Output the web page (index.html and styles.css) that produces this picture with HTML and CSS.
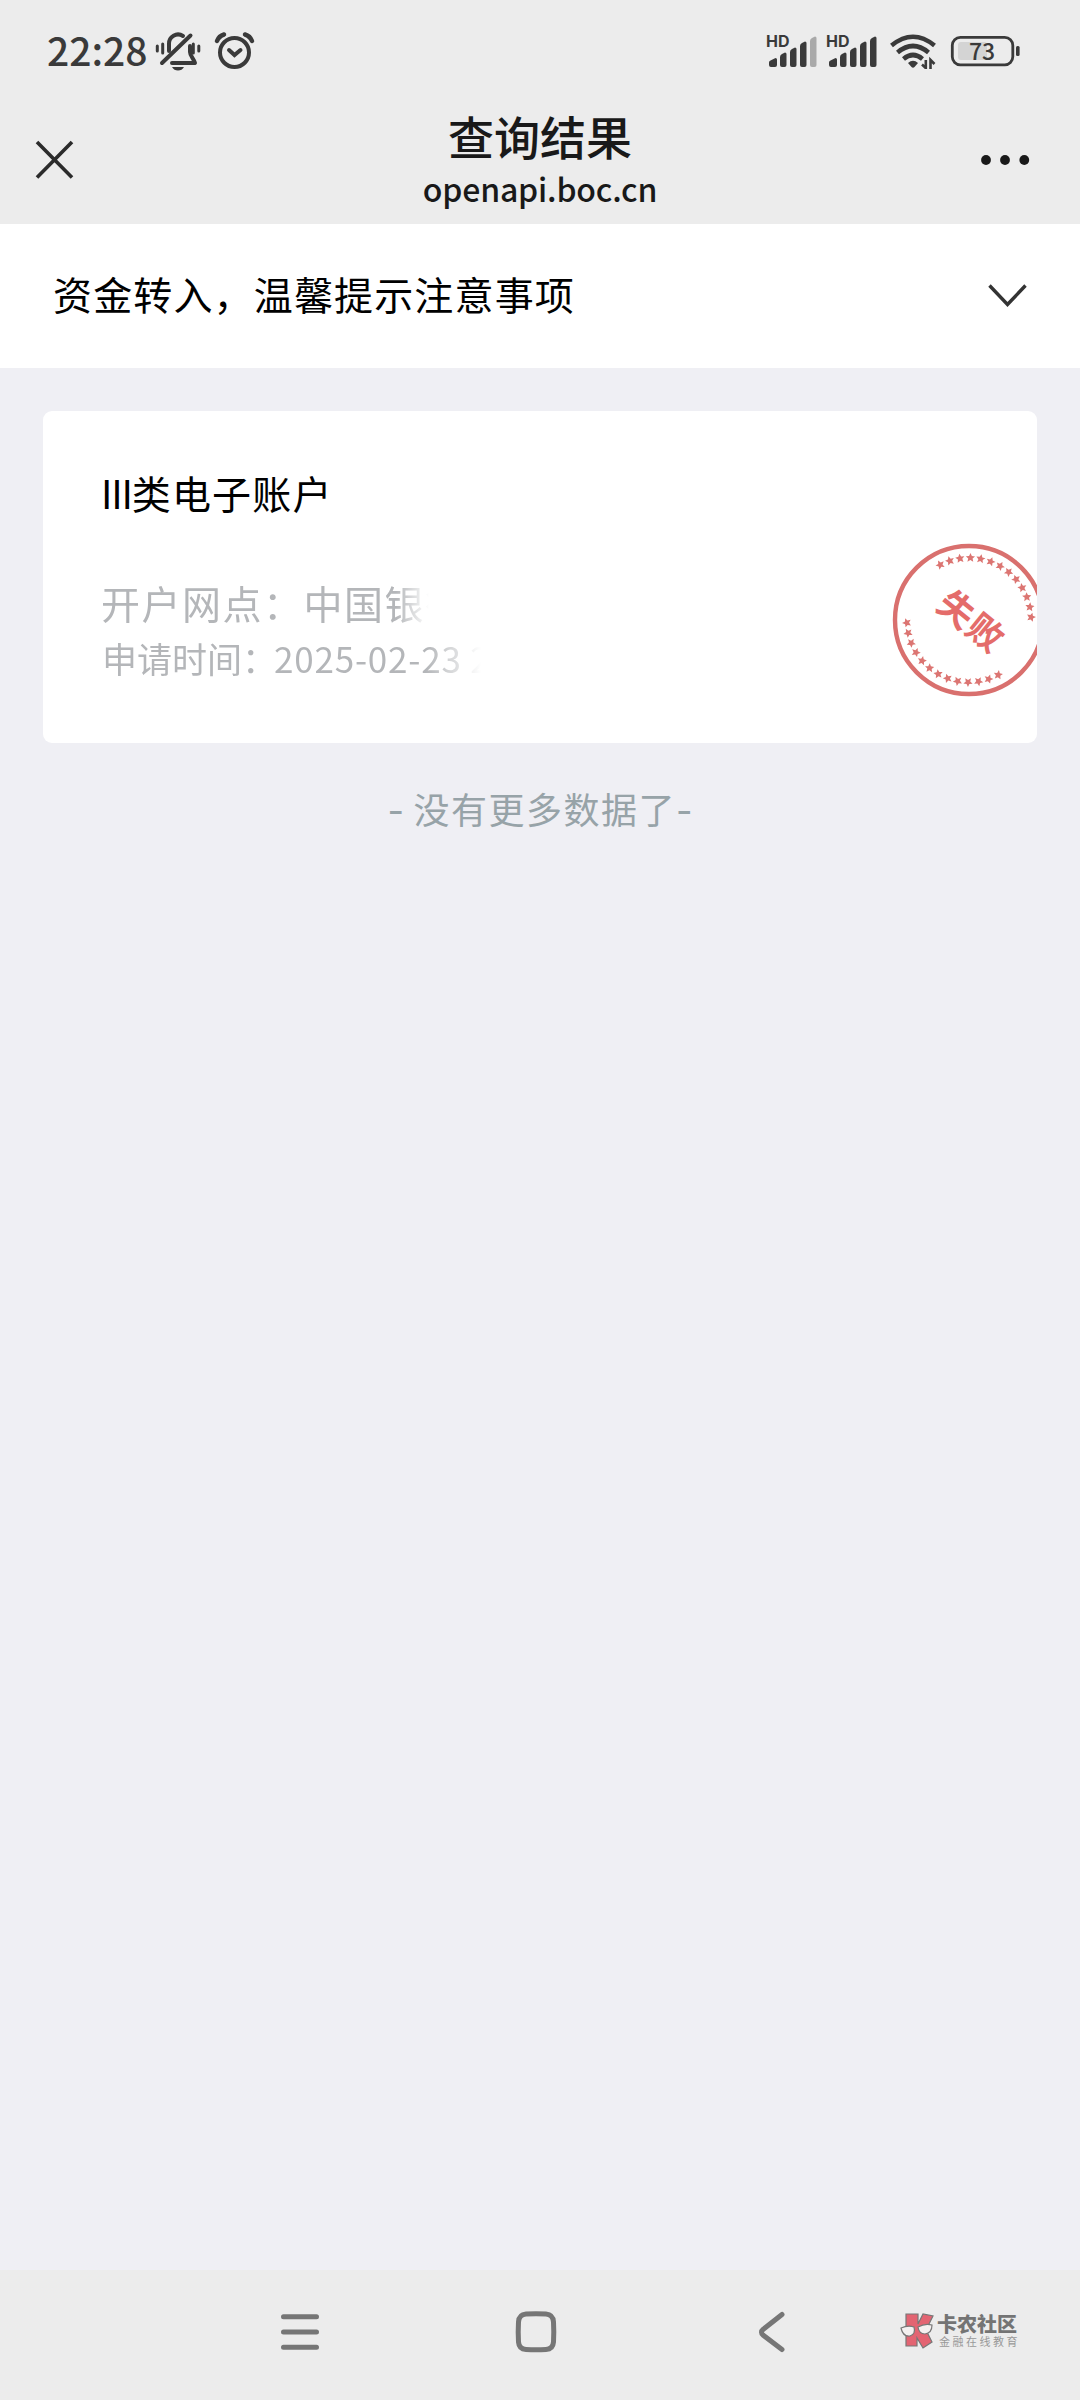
FILE: index.html
```html
<!DOCTYPE html>
<html lang="zh-CN">
<head>
<meta charset="utf-8">
<title>查询结果</title>
<link rel="stylesheet" href="styles.css">
</head>
<body>
<div class="header">
<div class="status">
<span class="time">22:28</span>
<svg class="status-left" width="110" height="102" viewBox="150 0 110 102" fill="none" stroke="#3a3a3a" stroke-width="4" stroke-linecap="round">
<!-- muted bell -->
<path d="M169 51V44a9 9 0 0 1 14-8M190 46v6c0 4 4 7 5 11H172" stroke-linejoin="round"/>
<path d="M162 63L190.500 35.500"/>
<path d="M157.300 46v5M162.700 44v9M193.300 44v9M198.800 46v5" stroke-width="3"/>
<path d="M172 67h12q-2 3.500-6 3.500t-6-3.500z" fill="#3a3a3a" stroke="none"/>
<!-- alarm clock -->
<circle cx="234.500" cy="52.500" r="14.500"/>
<path d="M229 50l5.500 5 6-5"/>
<path d="M217 41q2-5 7-6.500M252 41q-2-5-7-6.500" stroke-width="4.500"/>
</svg>
<svg class="status-right" width="270" height="102" viewBox="760 0 270 102" fill="#3a3a3a">
<text class="hd" x="766" y="47">HD</text>
<path d="M769 65v-2.500q0-1.500 1.500-2l5-2.500q1.500 0 1.500 1.500V65q0 2-2 2h-4q-2 0-2-2z"/>
<path d="M780 57q0-2 2-3l3-1.500q1.500 0 1.500 1.500v11q0 2-2 2h-2.500q-2 0-2-2z"/>
<path d="M790 52q0-2 2-3l3-1.500q1.500 0 1.500 1.500v16q0 2-2 2h-2.500q-2 0-2-2z"/>
<path d="M800 46q0-2 2-3l3-1.500q1.500 0 1.500 1.500v22q0 2-2 2h-2.500q-2 0-2-2z"/>
<path d="M810 41q0-2 2-3l3-1.500q1.500 0 1.500 1.500v27q0 2-2 2h-2.500q-2 0-2-2z" fill="#a9a9a9"/>
<text class="hd" x="826" y="47">HD</text>
<path d="M829 65v-2.500q0-1.500 1.500-2l5-2.500q1.500 0 1.500 1.500V65q0 2-2 2h-4q-2 0-2-2z"/>
<path d="M840 57q0-2 2-3l3-1.500q1.500 0 1.500 1.500v11q0 2-2 2h-2.500q-2 0-2-2z"/>
<path d="M850 52q0-2 2-3l3-1.500q1.500 0 1.500 1.500v16q0 2-2 2h-2.500q-2 0-2-2z"/>
<path d="M860 46q0-2 2-3l3-1.500q1.500 0 1.500 1.500v22q0 2-2 2h-2.500q-2 0-2-2z"/>
<path d="M870 41q0-2 2-3l3-1.500q1.500 0 1.500 1.500v27q0 2-2 2h-2.500q-2 0-2-2z"/>
<!-- wifi -->
<g fill="none" stroke="#3a3a3a" stroke-width="4.600">
<path d="M891.500 45.500Q913 28 934.500 45.500"/>
<path d="M897.500 52.500Q913 39.500 928.500 52.500"/>
<path d="M903.500 59Q913 51 922.500 59"/>
</g>
<path d="M908 63q5-4.500 10 0l-3.500 4q-1.500 1.500-3 0z"/>
<path d="M925.800 60v9M922 64.500l3.800 3.500M930.500 69v-9l4 4" fill="none" stroke="#3a3a3a" stroke-width="2.600"/>
<!-- battery -->
<rect x="958" y="42" width="29" height="18" rx="3" fill="#d4d4d4"/>
<rect x="952.300" y="37.300" width="60.500" height="27.500" rx="8" fill="none" stroke="#3a3a3a" stroke-width="2.800"/>
<rect x="1016" y="46" width="3.600" height="10" rx="1.500"/>
<text class="battery" x="969" y="59.500">73</text>
</svg>
</div>
<div class="titlebar">
<svg width="40" height="40" viewBox="0 0 40 40" fill="none" stroke="#2b2b2b" stroke-width="3.600">
<path d="M2 2l35 35.500M37 2l-35 35.500"/>
</svg>
<div class="titles">
<div class="title">查询结果</div>
<div class="url">openapi.boc.cn</div>
</div>
<svg width="50" height="12" viewBox="0 0 50 12" fill="#191919">
<circle cx="6" cy="6" r="4.900"/><circle cx="25" cy="6" r="4.900"/><circle cx="44.300" cy="6" r="4.900"/>
</svg>
</div>
</div>

<div class="notice">
<span>资金转入，温馨提示注意事项</span>
<svg width="40" height="26" viewBox="0 0 40 26" fill="none" stroke="#333" stroke-width="3.400">
<path d="M1.500 2.500l18 19 18-19"/>
</svg>
</div>

<div class="card">
<div class="account"><span class="roman">III</span>类电子账户</div>
<div class="branch">开户网点：中国银行</div>
<div class="apply">申请时间：<span class="date">2025-02-23 2</span></div>
<svg class="stamp" width="156" height="156" viewBox="-78 -78 156 156">
<defs><path id="star" d="M0-67l1.400 3 3.200.3-2.400 2.200.7 3.200-2.900-1.700-2.900 1.700.7-3.200-2.400-2.200 3.200-.3z"/></defs>
<circle r="74" fill="none" stroke="#d9706e" stroke-width="4.400"/>
<g fill="#dc7572">
<use href="#star" transform="rotate(-27.500)"/><use href="#star" transform="rotate(-17.900)"/><use href="#star" transform="rotate(-8.300)"/><use href="#star" transform="rotate(1.300)"/><use href="#star" transform="rotate(10.800)"/><use href="#star" transform="rotate(20.400)"/><use href="#star" transform="rotate(30)"/><use href="#star" transform="rotate(39.600)"/><use href="#star" transform="rotate(49.200)"/><use href="#star" transform="rotate(58.800)"/><use href="#star" transform="rotate(68.300)"/><use href="#star" transform="rotate(77.900)"/><use href="#star" transform="rotate(87.500)"/>
<use href="#star" transform="rotate(152)"/><use href="#star" transform="rotate(161.600)"/><use href="#star" transform="rotate(171.200)"/><use href="#star" transform="rotate(180.900)"/><use href="#star" transform="rotate(190.500)"/><use href="#star" transform="rotate(200.100)"/><use href="#star" transform="rotate(209.700)"/><use href="#star" transform="rotate(219.400)"/><use href="#star" transform="rotate(229)"/><use href="#star" transform="rotate(238.600)"/><use href="#star" transform="rotate(248.300)"/><use href="#star" transform="rotate(257.900)"/><use href="#star" transform="rotate(267.500)"/>
</g>
<text class="stamp-text" transform="translate(2.500 1.500) rotate(39)" y="13">失败</text>
</svg>
</div>

<div class="nomore"><span class="dash">-</span> 没有更多数据了<span class="dash">-</span></div>

<div class="nav">
<svg width="44" height="44" viewBox="0 0 44 44" fill="none" stroke="#767676" stroke-width="5" stroke-linecap="round">
<path d="M5.500 6.700h33M5.500 22h33M5.500 37.300h33"/>
</svg>
<svg width="44" height="44" viewBox="0 0 44 44" fill="none" stroke="#767676" stroke-width="5">
<path d="M12 4q10-.6 20 0 7 .5 7.500 8 .6 10 0 20-.5 7-7.500 7.500-10 .6-20 0-7-.5-7.500-7.500-.6-10 0-20Q5 4.500 12 4z"/>
</svg>
<svg width="44" height="44" viewBox="0 0 44 44" fill="none" stroke="#767676" stroke-width="5" stroke-linecap="round">
<path d="M32 4.500L13 19.500q-3 2.500 0 5.500L32 39.500"/>
</svg>
<div class="brand">
<svg width="36" height="38" viewBox="0 0 36 38" stroke="#777" stroke-width="1.200">
<path d="M6 2h12v10l5-10 10 2-7 14 6 12-9 6-6-10v8H6z" fill="#e36472"/>
<path d="M1 16q7-3 13-1 2 7-4 9-7 1-9-8zM18 15q7-4 14-2 0 8-7 9-6 0-7-7z" fill="#f4f0f0"/>
</svg>
<div class="brand-text">
<div class="brand-name">卡农社区</div>
<div class="brand-sub">金融在线教育</div>
</div>
</div>
</div>
</body>
</html>
```
FILE: styles.css
```css
body {
  margin: 0;
  width: 1080px;
  height: 2400px;
  display: flex;
  flex-direction: column;
  background-color: #efeff4;
  font-family: "Noto Sans CJK SC", sans-serif;
  overflow: hidden;
}

svg {
  display: block;
  flex: none;
}

.header {
  height: 224px;
  background-color: #ececec;
}

.status {
  display: flex;
  height: 102px;
  padding: 0 50px 0 47px;
}

.time {
  width: 103px;
  font-size: 39px;
  font-weight: 500;
  line-height: 98px;
  color: #3a3a3a;
}

.status-right {
  margin-left: auto;
}

.hd {
  font-family: Inter, sans-serif;
  font-size: 16px;
  font-weight: 700;
}

.battery {
  font-family: "Noto Sans CJK SC", sans-serif;
  font-size: 23px;
  font-weight: 500;
}

.titlebar {
  display: flex;
  justify-content: space-between;
  align-items: center;
  height: 115px;
  padding: 0 50px 0 35px;
}

.titles {
  margin-left: 25px;
  padding-top: 1px;
  text-align: center;
  color: #191919;
}

.title {
  font-size: 46px;
  font-weight: 500;
  line-height: 56px;
}

.url {
  font-size: 32px;
  font-weight: 500;
  letter-spacing: -0.2px;
  line-height: 50px;
}

.notice {
  display: flex;
  justify-content: space-between;
  align-items: center;
  height: 144px;
  padding: 0 52px 0 53px;
  background-color: #fff;
  font-size: 39px;
  letter-spacing: 1.15px;
  line-height: 60px;
  color: #000;
}

.notice span {
  padding-bottom: 7px;
}

.card {
  position: relative;
  height: 332px;
  margin: 43px 43px 0;
  box-sizing: border-box;
  padding: 51px 59px 0 58px;
  border-radius: 9px;
  background-color: #fff;
  overflow: hidden;
}

.account {
  font-size: 39px;
  letter-spacing: 1.2px;
  line-height: 60px;
  color: #000;
}

.roman {
  letter-spacing: -1.2px;
}

.branch {
  width: 350px;
  margin-top: 50px;
  font-size: 39px;
  letter-spacing: 1.5px;
  line-height: 60px;
  color: #b4b6b9;
  white-space: nowrap;
  mask-image: linear-gradient(to right, #000 295px, transparent 328px);
}

.apply {
  width: 420px;
  padding-left: 1px;
  font-size: 35px;
  line-height: 51px;
  color: #b4b6b9;
  white-space: nowrap;
  mask-image: linear-gradient(to right, #000 325px, transparent 380px);
}

.date {
  margin-left: -3px;
  letter-spacing: 0.8px;
}

/* stamp sticks out of the card on the right */
.stamp {
  position: absolute;
  top: 131px;
  right: -10px;
}

.stamp-text {
  font-size: 36px;
  font-weight: 700;
  letter-spacing: 1px;
  text-anchor: middle;
  fill: #e46c6a;
}

.nomore {
  margin-top: 35px;
  font-size: 36px;
  letter-spacing: 1.5px;
  line-height: 60px;
  text-align: center;
  color: #97a3a8;
}

.dash {
  font-family: Inter, sans-serif;
  letter-spacing: 0;
}

.nav {
  display: flex;
  align-items: center;
  height: 130px;
  margin-top: auto;
  padding-left: 278px;
  box-sizing: border-box;
  padding-bottom: 6px;
  gap: 192px;
  background-color: #ececec;
}

.brand {
  display: flex;
  align-items: center;
  margin-left: -86px;
  margin-top: -3px;
  gap: 1px;
}

.brand-text {
  color: #747474;
  white-space: nowrap;
}

.brand-name {
  font-size: 20px;
  font-weight: 900;
  line-height: 20px;
}

.brand-sub {
  padding-left: 2px;
  font-size: 11px;
  letter-spacing: 2.5px;
  line-height: 14px;
  color: #999;
}
```
